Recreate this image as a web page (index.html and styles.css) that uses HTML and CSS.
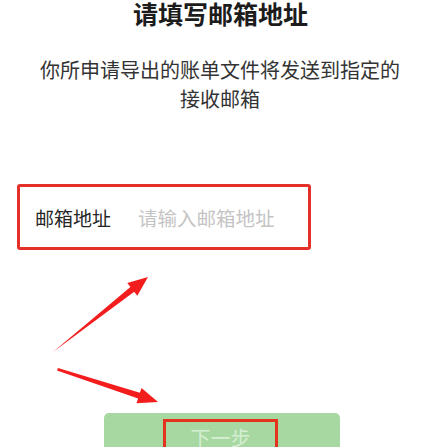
FILE: index.html
```html
<!DOCTYPE html>
<html lang="zh">
<head>
<meta charset="utf-8">
<link rel="stylesheet" href="styles.css">
</head>
<body>
<div class="page">
  <h1 class="title">请填写邮箱地址</h1>
  <p class="subtitle">你所申请导出的账单文件将发送到指定的<br>接收邮箱</p>
  <div class="field">
    <span class="label">邮箱地址</span>
    <span class="placeholder">请输入邮箱地址</span>
  </div>
  <div class="btn-row">
    <div class="btn">
      <div class="btn-mark"><span class="btn-text">下一步</span></div>
    </div>
  </div>
  <svg class="arrows" width="434" height="447" viewBox="0 0 434 447">
    <polygon fill="#f41d1d" points="53,352 130.4,287 127.3,283.1 148,277 137.3,295.7 134.2,291.8"/>
    <polygon fill="#f41d1d" points="58,368 139.9,392.8 141.5,388.1 158,402 136.5,403.3 138.1,398.6 57,370.5"/>
  </svg>
</div>
</body>
</html>
```
FILE: styles.css
```css
html, body {
  margin: 0;
  padding: 0;
  background: #ffffff;
}
.page {
  position: relative;
  width: 434px;
  height: 447px;
  overflow: hidden;
  display: flex;
  flex-direction: column;
  font-family: "Noto Sans CJK SC", "Noto Sans", sans-serif;
}
.page > * {
  flex-shrink: 0;
}
.title {
  margin: 0;
  font-size: 25px;
  line-height: 27px;
  font-weight: 700;
  color: #1c1c1c;
  text-align: center;
  padding-left: 7px;
}
.subtitle {
  margin: 28px 0 0 0;
  font-size: 20px;
  line-height: 29px;
  color: #333333;
  text-align: center;
  padding-left: 6px;
}
.field {
  margin: 71px 0 0 17px;
  width: 273px;
  height: 60px;
  border: 3px solid #e5302a;
  border-radius: 3px;
  display: flex;
  align-items: center;
  padding-left: 15px;
  box-sizing: content-box;
  font-size: 19px;
}
.label {
  color: #262626;
}
.placeholder {
  color: #c4c4c4;
  margin-left: 27px;
  font-size: 19.5px;
}
.btn-row {
  margin-top: 163px;
  padding-left: 104px;
}
.btn {
  width: 236px;
  height: 50px;
  background: #a8d8a1;
  border-radius: 5px;
  padding-left: 59px;
  padding-top: 6px;
  box-sizing: border-box;
}
.btn-mark {
  width: 115px;
  height: 50px;
  border: 3px solid #e2331f;
  box-sizing: border-box;
  display: flex;
  justify-content: center;
  padding-top: 3px;
}
.btn-text {
  font-size: 20px;
  line-height: 26px;
  color: #d6eed2;
}
.arrows {
  position: absolute;
  left: 0;
  top: 0;
  pointer-events: none;
}
```
